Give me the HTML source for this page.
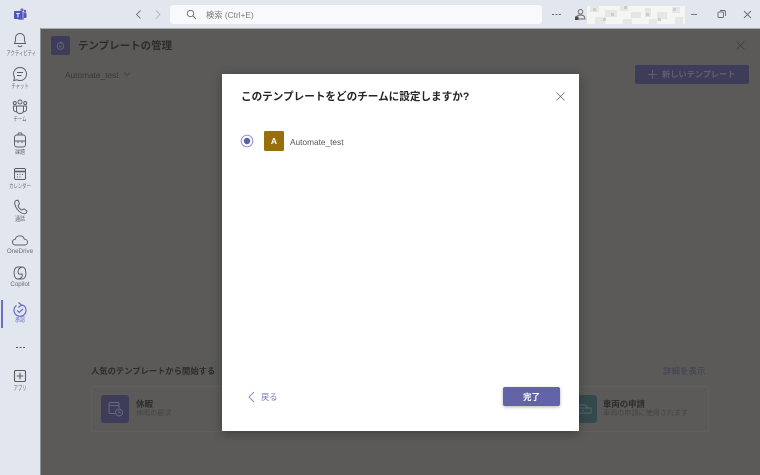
<!DOCTYPE html>
<html lang="ja">
<head>
<meta charset="utf-8">
<style>
html,body{margin:0;padding:0}
body{width:760px;height:475px;position:relative;overflow:hidden;background:#5b5a58;font-family:"Liberation Sans","Noto Sans CJK JP",sans-serif;color:#424242}
#w{position:absolute;left:0;top:0;width:760px;height:475px;background:#5b5a58;filter:blur(.35px);overflow:hidden}
.a{position:absolute;white-space:nowrap}
#top{left:0;top:0;width:760px;height:28px;background:#e2e7ef}
#side{left:0;top:28px;width:41px;height:447px;background:#e2e7ef;border-right:1px solid #8f9296;box-sizing:border-box}
#line{left:0;top:27.5px;width:760px;height:1px;background:#a9acb0}
.lb{position:absolute;left:0;width:40px;text-align:center;font-size:6.4px;line-height:9px;color:#6a6a6d;white-space:nowrap;transform:scaleX(.68);transform-origin:20px 0}
.k{transform:scaleX(.8);font-size:6.2px}
.l{transform:none;font-size:6.2px}
.ic{position:absolute;left:10px;width:20px;height:20px;fill:none;stroke:#5c5c5f;stroke-width:.95}
#search{left:170px;top:5px;width:372px;height:19px;background:#f8f9fb;border-radius:3px}
#modal{left:222px;top:74px;width:357px;height:357px;background:#fff;box-shadow:0 2px 10px rgba(0,0,0,.3)}
</style>
</head>
<body>
<div id="w">
<div class="a" id="top"></div>
<div class="a" id="line"></div>

<!-- Teams logo -->
<svg class="a" style="left:13px;top:8px" width="14" height="13" viewBox="0 0 14 13">
<circle cx="9" cy="2" r="1.6" fill="#6a6fc4"/><circle cx="12" cy="3" r="1.2" fill="#5558af"/>
<rect x="10" y="4.5" width="3.5" height="5.5" rx="1" fill="#5558af"/>
<rect x="5" y="4" width="6" height="8" rx="1.5" fill="#7b83d6"/>
<rect x="1" y="3" width="8" height="8" rx=".7" fill="#4b53bc"/>
<text x="5" y="9.6" font-size="6.5" font-weight="700" fill="#fff" text-anchor="middle" font-family="Liberation Sans">T</text>
</svg>

<!-- nav arrows -->
<svg class="a" style="left:133px;top:8px" width="32" height="13" viewBox="0 0 32 13" fill="none" stroke-width=".9">
<path d="M7.5 2.5 L3.5 6.5 L7.5 10.5" stroke="#74767a"/>
<path d="M23 2.5 L27 6.5 L23 10.5" stroke="#b4b8be"/>
</svg>

<div class="a" id="search"></div>
<svg class="a" style="left:186px;top:9px" width="11" height="11" viewBox="0 0 11 11" fill="none" stroke="#66676b" stroke-width=".9"><circle cx="4.5" cy="4.5" r="3.2"/><path d="M7 7 L10 10"/></svg>
<div class="a" style="left:206px;top:9px;font-size:8.3px;line-height:12px;color:#77787b">検索 (Ctrl+E)</div>

<!-- top right -->
<div class="a" style="left:552px;top:13.5px;width:1.6px;height:1.6px;background:#66676b;box-shadow:3.4px 0 #66676b,6.8px 0 #66676b"></div>
<svg class="a" style="left:574px;top:8px" width="12" height="13" viewBox="0 0 12 13" fill="none" stroke="#66676b" stroke-width=".9"><circle cx="6.5" cy="3.8" r="2.3"/><path d="M2 11 C2 8 4 7 6.5 7 C9 7 11 8 11 11 Z"/><path d="M1 8.5 L4.5 8.5 L4.5 12 L1 12 Z" fill="#4a4a4c" stroke="none"/></svg>
<svg class="a" style="left:587px;top:6px" width="98" height="18" viewBox="0 0 98 18">
<rect width="98" height="18" fill="#f5f5f4"/>
<g fill="#e6e6e5">
<rect x="3" y="0" width="9" height="6"/><rect x="18" y="4" width="12" height="7"/><rect x="33" y="0" width="8" height="5"/><rect x="44" y="6" width="10" height="6"/><rect x="58" y="2" width="6" height="9"/><rect x="70" y="6" width="10" height="7"/><rect x="85" y="1" width="8" height="6"/><rect x="8" y="11" width="10" height="7"/><rect x="36" y="13" width="9" height="5"/><rect x="62" y="13" width="8" height="5"/><rect x="88" y="11" width="8" height="7"/>
</g>
<g fill="#cdcdcc">
<rect x="6" y="2" width="3" height="3"/><rect x="16" y="12" width="3" height="3"/><rect x="37" y="0" width="3" height="3"/><rect x="59" y="7" width="3" height="3"/><rect x="71" y="12" width="3" height="3"/><rect x="86" y="2" width="3" height="3"/><rect x="24" y="7" width="3" height="3"/>
</g>
</svg>
<svg class="a" style="left:690px;top:8px" width="64" height="13" viewBox="0 0 64 13" fill="none" stroke="#6a6b6f" stroke-width=".9">
<path d="M1 6.5 H7"/>
<rect x="28" y="4" width="5.5" height="5.5" rx="1"/><path d="M30 2.5 H34 Q35.5 2.5 35.5 4 V8"/>
<path d="M54 3 L61 10 M61 3 L54 10"/>
</svg>

<!-- sidebar -->
<div class="a" id="side"></div>
<svg class="ic" style="top:30px" viewBox="0 0 20 20"><path d="M4.5 13.5 C5.5 12 5.5 11 5.5 8 C5.5 5.3 7.5 3.5 10 3.5 C12.5 3.5 14.5 5.3 14.5 8 C14.5 11 14.5 12 15.5 13.5 Z"/><path d="M8 15.5 C8.5 17 11.5 17 12 15.5"/></svg>
<div class="lb" style="top:48.5px">アクティビティ</div>
<svg class="ic" style="top:64px" viewBox="0 0 20 20"><path d="M10 3.5 C14 3.5 16.5 6.5 16.5 10 C16.5 13.5 14 16.5 10 16.5 C8.8 16.5 7.8 16.3 7 15.8 L3.7 16.6 L4.6 13.5 C4 12.5 3.5 11.3 3.5 10 C3.5 6.5 6 3.5 10 3.5 Z"/><path d="M7 8.5 H13 M7 11.5 H11.5"/></svg>
<div class="lb" style="top:81.5px">チャット</div>
<svg class="ic" style="top:97px" viewBox="0 0 20 20"><circle cx="10" cy="5" r="2"/><circle cx="4.8" cy="6" r="1.5"/><circle cx="15.2" cy="6" r="1.5"/><path d="M6.5 9 H13.5 V13.5 C13.5 15.5 12 16.5 10 16.5 C8 16.5 6.5 15.5 6.5 13.5 Z"/><path d="M6 9 H3.5 V12.5 C3.5 14 5 15 6.7 14.6 M14 9 H16.5 V12.5 C16.5 14 15 15 13.3 14.6"/></svg>
<div class="lb" style="top:114.5px">チーム</div>
<svg class="ic" style="top:130px" viewBox="0 0 20 20"><path d="M8 5 V4 C8 2.5 12 2.5 12 4 V5"/><rect x="4.5" y="5" width="11" height="12" rx="2.5"/><path d="M4.5 11 H15.5 M8 11 V13 M12 11 V13"/></svg>
<div class="lb k" style="top:148px">課題</div>
<svg class="ic" style="top:164px" viewBox="0 0 20 20"><rect x="4.5" y="4.5" width="11" height="11" rx="1.5"/><path d="M4.5 7.5 H15.5" stroke-width="1.6"/><path d="M7 10.5 H8 M9.5 10.5 H10.5 M12 10.5 H13 M7 13 H8 M9.5 13 H10.5" /></svg>
<div class="lb" style="top:181.5px">カレンダー</div>
<svg class="ic" style="top:197px" viewBox="0 0 20 20"><path d="M6 3.5 L8 3.2 L9.5 6.8 L8 8.5 C8.5 10.5 10 12.3 12 13 L14 11.8 L17 14 L16.3 15.8 C15.5 17 13.5 17 11.5 16 C8 14.2 5.5 10.5 4.8 7 C4.5 5.5 5 4.2 6 3.5 Z"/></svg>
<div class="lb k" style="top:214.5px">通話</div>
<svg class="ic" style="top:230px" viewBox="0 0 20 20"><path d="M5.5 15 C3.5 15 2.5 13.5 2.5 12 C2.5 10.5 3.7 9.3 5.2 9.3 C5.8 7 7.8 5.8 9.8 5.8 C12 5.8 13.8 7.2 14.4 9.2 C16.2 9.2 17.5 10.5 17.5 12.2 C17.5 13.8 16.3 15 14.7 15 Z"/></svg>
<div class="lb l" style="top:247px">OneDrive</div>
<svg class="ic" style="top:263px" viewBox="0 0 20 20"><path d="M8 4 H12 C14 4 15.5 5.5 15.5 7.5 C16.5 10.5 16 16 12 16 H8 C6 16 4.5 14.5 4.5 12.5 C3.5 9.5 4 4 8 4 Z"/><path d="M12 4 C9 5 8 7 8 9 C8 11 9 11.5 12 11 C13 13 12 15 8 16"/></svg>
<div class="lb l" style="top:280px">Copilot</div>
<div class="a" style="left:1px;top:300px;width:2px;height:28px;background:#6a6ec9"></div>
<svg class="ic" style="top:300px;stroke:#6468c6;stroke-width:1.2" viewBox="0 0 20 20"><path d="M11.5 5 C15 5.2 16 8 16 10.2 C16 13.8 13.3 16.3 10 16.3 C6.7 16.3 4 13.8 4 10.2 C4 8 5 6.5 6.5 5.5"/><path d="M8.5 2.5 L11.5 5 L8.5 7.5"/><path d="M7.2 10.4 L9.3 12.4 L13 8.8"/></svg>
<div class="lb k" style="top:316px;color:#6a6ec9">承認</div>
<div class="a" style="left:16px;top:346.5px;width:1.8px;height:1.8px;background:#5c5c5f;box-shadow:3.5px 0 #5c5c5f,7px 0 #5c5c5f"></div>
<svg class="ic" style="top:366px" viewBox="0 0 20 20"><rect x="4.5" y="4.5" width="11" height="11" rx="1.5" stroke-width="1.1"/><path d="M10 6.8 V13.2 M6.8 10 H13.2" stroke-width="1.1"/></svg>
<div class="lb" style="top:383.5px">アプリ</div>

<!-- dimmed background page -->
<div class="a" style="left:51px;top:36px;width:19px;height:19px;background:#3d3d5a;border-radius:2px"></div>
<svg class="a" style="left:55px;top:40px" width="11" height="11" viewBox="0 0 11 11" fill="none" stroke="#6b6b85" stroke-width=".8"><circle cx="5.5" cy="6" r="3.3"/><path d="M5.5 1.5 L6.5 2.7 L5.5 3.5 M4.3 6.2 L5.2 7 L6.7 5.3"/></svg>
<div class="a" style="left:78px;top:38px;font-size:10.5px;line-height:16px;font-weight:700;color:#2c2c2c">テンプレートの管理</div>
<svg class="a" style="left:735px;top:40px" width="11" height="11" viewBox="0 0 11 11" fill="none" stroke="#3c3c3c" stroke-width=".8"><path d="M1.5 1.5 L9.5 9.5 M9.5 1.5 L1.5 9.5"/></svg>
<div class="a" style="left:65px;top:69px;font-size:8.3px;line-height:12px;color:#383838">Automate_test</div>
<svg class="a" style="left:123px;top:71px" width="8" height="6" viewBox="0 0 8 6" fill="none" stroke="#3f3f3f" stroke-width=".8"><path d="M1 1.5 L4 4.5 L7 1.5"/></svg>
<div class="a" style="left:635px;top:65px;width:114px;height:19px;background:#3d3d5a;border-radius:2px"></div>
<svg class="a" style="left:647px;top:69px" width="11" height="11" viewBox="0 0 11 11" fill="none" stroke="#5f5f76" stroke-width="1"><path d="M5.5 1 V10 M1 5.5 H10"/></svg>
<div class="a" style="left:662px;top:69px;font-size:8.2px;line-height:12px;font-weight:700;color:#5f5f76">新しいテンプレート</div>

<div class="a" style="left:91px;top:365px;font-size:8.3px;line-height:12px;font-weight:700;color:#2c2c2c">人気のテンプレートから開始する</div>
<div class="a" style="left:663px;top:365px;font-size:8.5px;line-height:12px;color:#3f3f58">詳細を表示</div>
<div class="a" style="left:91px;top:386px;width:135px;height:46px;border:1px solid #605f5d;box-sizing:border-box;border-radius:2px"></div>
<div class="a" style="left:572px;top:386px;width:137px;height:46px;border:1px solid #605f5d;box-sizing:border-box;border-radius:2px"></div>
<div class="a" style="left:101px;top:395px;width:28px;height:28px;background:#3d3d5a;border-radius:3px"></div>
<svg class="a" style="left:108px;top:401px" width="16" height="16" viewBox="0 0 16 16" fill="none" stroke="#6b6b85" stroke-width=".9"><path d="M7 12.5 H2.5 Q1 12.5 1 11 V3 Q1 1.5 2.5 1.5 H9.5 Q11 1.5 11 3 V7"/><path d="M1 4.5 H11"/><circle cx="11" cy="11.5" r="3.5"/><path d="M11 9.5 V11.5 H12.7"/></svg>
<div class="a" style="left:136px;top:398px;font-size:8.5px;line-height:12px;font-weight:700;color:#2c2c2c">休暇</div>
<div class="a" style="left:136px;top:408px;font-size:7.1px;line-height:11px;color:#454545">休暇の要求</div>
<div class="a" style="left:579px;top:395px;width:18px;height:28px;background:#33494b;border-radius:0 3px 3px 0"></div>
<svg class="a" style="left:579px;top:403px" width="14" height="13" viewBox="0 0 14 13" fill="none" stroke="#52696b" stroke-width=".9"><path d="M0 2 H6 L9 5 H12 V10 H0 M9 5 H0"/><path d="M3 7.5 H5"/></svg>
<div class="a" style="left:603px;top:398px;font-size:8.4px;line-height:12px;font-weight:700;color:#2c2c2c">車両の申請</div>
<div class="a" style="left:603px;top:408px;font-size:7.1px;line-height:11px;color:#454545">車両の申請に使用されます</div>

<!-- modal -->
<div class="a" id="modal"></div>
<div class="a" style="left:241px;top:89px;font-size:10.6px;line-height:17px;font-weight:700;color:#242424">このテンプレートをどのチームに設定しますか?</div>
<svg class="a" style="left:555px;top:91px" width="11" height="11" viewBox="0 0 11 11" fill="none" stroke="#707070" stroke-width=".8"><path d="M1.5 1.5 L9.5 9.5 M9.5 1.5 L1.5 9.5"/></svg>
<svg class="a" style="left:240px;top:134px" width="14" height="14" viewBox="0 0 14 14"><circle cx="7" cy="7" r="5.8" fill="none" stroke="#8f93cc" stroke-width="1"/><circle cx="7" cy="7" r="3.2" fill="#5b5fa8"/></svg>
<div class="a" style="left:264px;top:131px;width:20px;height:20px;background:#986f0b;border-radius:1.5px;color:#fff;font-size:8.5px;font-weight:700;line-height:20px;text-align:center">A</div>
<div class="a" style="left:290px;top:136px;font-size:8.3px;line-height:12px;color:#555">Automate_test</div>
<svg class="a" style="left:247px;top:391px" width="9" height="12" viewBox="0 0 9 12" fill="none" stroke="#8185c4" stroke-width=".9"><path d="M7 1 L2 6 L7 11"/></svg>
<div class="a" style="left:261px;top:391px;font-size:8.3px;line-height:12px;color:#7579bd">戻る</div>
<div class="a" style="left:503px;top:387px;width:57px;height:19px;background:#6264a7;border-radius:2px;box-shadow:0 1px 3px rgba(0,0,0,.3);color:#fff;font-size:8.5px;font-weight:700;line-height:20px;text-align:center">完了</div>
</div>
</body>
</html>
